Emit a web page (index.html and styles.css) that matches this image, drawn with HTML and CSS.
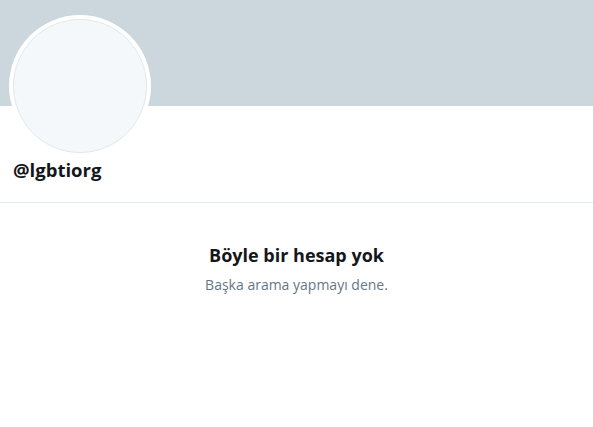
FILE: index.html
```html
<!DOCTYPE html>
<html lang="tr">
<head>
<meta charset="utf-8">
<title>@lgbtiorg</title>
<link rel="stylesheet" href="styles.css">
</head>
<body>
<div class="page">
  <div class="banner"></div>
  <div class="profile">
    <div class="avatar"><div class="avatar-inner"></div></div>
    <div class="handle">@lgbtiorg</div>
  </div>
  <div class="empty">
    <div class="empty-title">Böyle bir hesap yok</div>
    <div class="empty-sub">Başka arama yapmayı dene.</div>
  </div>
</div>
</body>
</html>
```
FILE: styles.css
```css
html, body {
  margin: 0;
  padding: 0;
  background: #ffffff;
}
.page {
  font-family: "Open Sans", "Noto Sans", "Liberation Sans", sans-serif;
  color: #14171a;
}
.banner {
  height: 106px;
  background: #ccd6dd;
}
.profile {
  display: flow-root;
  padding: 0 13px 0 9px;
  border-bottom: 1px solid #e6ecf0;
  height: 97px;
  box-sizing: border-box;
}
.avatar {
  width: 142px;
  height: 142px;
  box-sizing: border-box;
  border-radius: 50%;
  background: #ffffff;
  padding: 4px;
  margin-top: -91px;
}
.avatar-inner {
  width: 100%;
  height: 100%;
  box-sizing: border-box;
  border-radius: 50%;
  background: #f5f8fa;
  border: 1px solid #e1e8ed;
}
.handle {
  margin-top: 1px;
  padding-left: 4px;
  font-size: 18.5px;
  font-weight: 700;
  line-height: 24px;
}
.empty {
  display: flex;
  flex-direction: column;
  align-items: center;
  padding-top: 40px;
}
.empty-title {
  font-size: 18px;
  font-weight: 700;
  line-height: 24px;
}
.empty-sub {
  margin-top: 8px;
  font-size: 14px;
  line-height: 20px;
  color: #657786;
}
```
